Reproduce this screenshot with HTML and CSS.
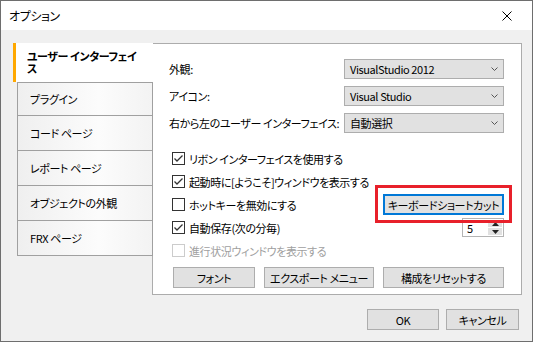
FILE: index.html
```html
<!DOCTYPE html>
<html>
<head>
    <title>オプション</title>
    <link rel="stylesheet" href="styles.css">
</head>
<body>

<div class="window">
    <div class="titlebar">
        <span class="title">オプション</span>
        <svg class="close" width="10" height="10" viewBox="0 0 10 10">
            <path d="M0.5 0.5 L9.5 9.5 M9.5 0.5 L0.5 9.5" stroke="#000" stroke-width="1" fill="none"/>
        </svg>
    </div>

    <div class="body">
        <div class="main">
            <div class="tabs">
                <div class="tab selected">ユーザー インターフェイ<br>ス</div>
                <div class="tab">プラグイン</div>
                <div class="tab">コード ページ</div>
                <div class="tab">レポート ページ</div>
                <div class="tab">オブジェクトの外観</div>
                <div class="tab">FRX ページ</div>
            </div>

            <div class="panel">
                <div class="fields">
                    <label>外観:</label>
                    <div class="combo">VisualStudio 2012 <svg width="7" height="4" viewBox="0 0 7 4"><path d="M0.5 0.5 L3.5 3.5 L6.5 0.5" stroke="#555" fill="none"/></svg></div>
                    <label>アイコン:</label>
                    <div class="combo">Visual Studio <svg width="7" height="4" viewBox="0 0 7 4"><path d="M0.5 0.5 L3.5 3.5 L6.5 0.5" stroke="#555" fill="none"/></svg></div>
                    <label>右から左のユーザー インターフェイス:</label>
                    <div class="combo">自動選択 <svg width="7" height="4" viewBox="0 0 7 4"><path d="M0.5 0.5 L3.5 3.5 L6.5 0.5" stroke="#555" fill="none"/></svg></div>
                </div>

                <div class="checks">
                    <div class="row">
                        <span class="check on"><svg width="11" height="11" viewBox="0 0 11 11"><path d="M1.5 5.5 L4 8 L9.5 2.5" stroke="#333" stroke-width="1.3" fill="none"/></svg></span>
                        <span>リボン インターフェイスを使用する</span>
                    </div>
                    <div class="row">
                        <span class="check on"><svg width="11" height="11" viewBox="0 0 11 11"><path d="M1.5 5.5 L4 8 L9.5 2.5" stroke="#333" stroke-width="1.3" fill="none"/></svg></span>
                        <span>起動時に[ようこそ]ウィンドウを表示する</span>
                    </div>
                    <div class="row">
                        <span class="check"></span>
                        <span>ホットキーを無効にする</span>
                        <div class="highlight">
                            <button class="btn focus">キーボードショートカット</button>
                        </div>
                    </div>
                    <div class="row">
                        <span class="check on"><svg width="11" height="11" viewBox="0 0 11 11"><path d="M1.5 5.5 L4 8 L9.5 2.5" stroke="#333" stroke-width="1.3" fill="none"/></svg></span>
                        <span>自動保存(次の分毎)</span>
                        <div class="spin">
                            <span>5</span>
                            <div class="spin-btns">
                                <div class="arrow"><svg width="7" height="4" viewBox="0 0 7 4"><path d="M0 4 L3.5 0 L7 4 Z" fill="#222"/></svg></div>
                                <div class="arrow"><svg width="7" height="4" viewBox="0 0 7 4"><path d="M0 0 L3.5 4 L7 0 Z" fill="#222"/></svg></div>
                            </div>
                        </div>
                    </div>
                    <div class="row disabled">
                        <span class="check"></span>
                        <span>進行状況ウィンドウを表示する</span>
                    </div>
                </div>

                <div class="panel-buttons">
                    <button class="btn w-font">フォント</button>
                    <button class="btn w-export">エクスポート メニュー</button>
                    <button class="btn w-reset">構成をリセットする</button>
                </div>
            </div>
        </div>

        <div class="footer">
            <button class="btn w-ok">OK</button>
            <button class="btn w-cancel">キャンセル</button>
        </div>
    </div>
</div>

</body>
</html>
```

FILE: styles.css
```css
/* options dialog */
* { box-sizing: border-box; }
body {
    margin: 0;
    font-family: "Noto Sans CJK JP", sans-serif;
    font-size: 11px;
    line-height: 14px;
    letter-spacing: -0.4px;
    font-feature-settings: "palt";
    color: #000;
}
.window {
    width: 533px; height: 342px;
    border: 1px solid #6e6e6e;
    background: #f0f0f0;
    display: flex; flex-direction: column;
}
.titlebar {
    height: 29px; background: #fff;
    display: flex; align-items: center; justify-content: space-between;
    padding: 0 20px 0 8px;
}
.title { font-size: 12px; }
.close { margin-top: 1px; }

.body { flex: 1; display: flex; flex-direction: column; }
.main { display: flex; margin: 13px 0 0 12px; }

.tabs { width: 140px; display: flex; flex-direction: column; margin-right: -1px; position: relative; z-index: 1; }
.tab {
    height: 36px; margin: -1px 0 0 4px;
    border: 1px solid #a0a0a0;
    background: linear-gradient(to right, #efefef, #fcfcfc 60%, #f3f3f3);
    display: flex; align-items: center;
    padding-left: 12px;
}
.tab.selected {
    height: 39px; margin: 0;
    border: none; border-left: 3px solid #ffa800;
    background: #fff;
    font-weight: bold; line-height: 12px;
    padding: 7px 0 0 11px; align-items: flex-start;
}
.tab:nth-child(2) { height: 34px; margin-top: 0; }

.panel {
    width: 370px; height: 252px;
    background: #fff; border: 1px solid #acacac;
    padding: 15px 17px 0 16px;
}
.fields {
    display: grid; grid-template-columns: 1fr 160px;
    grid-auto-rows: 20px; row-gap: 7px; align-items: center;
}
.combo {
    height: 20px; background: #e1e1e1; border: 1px solid #adadad;
    display: flex; align-items: center; justify-content: space-between;
    padding: 0 5px 0 5px;
}

.checks { margin-top: 14px; padding-left: 3px; }
.row { height: 23px; display: flex; align-items: center; gap: 4px; }
.check {
    width: 13px; height: 13px; border: 1px solid #333; background: #fff;
    display: flex; align-items: center; justify-content: center;
}
.disabled { color: #a0a0a0; }
.disabled .check { border-color: #cccccc; }

.btn {
    height: 21px; padding: 0;
    font: inherit; color: #000; letter-spacing: inherit;
    background: #e1e1e1; border: 1px solid #adadad;
}
.btn.focus { width: 121px; border: 2px solid #0078d7; }
.highlight {
    margin-left: auto; position: relative;
    display: flex;
}
.highlight::after {
    content: ""; position: absolute;
    left: -8px; right: -8px; top: -9px; bottom: -8px;
    border: 3px solid #e8202a;
}

.spin {
    margin-left: auto; width: 42px; height: 19px;
    border: 1px solid #b4b4b4; background: #fff;
    display: flex; justify-content: space-between; align-items: center;
    padding: 0 1px 0 4px;
}
.spin-btns { display: flex; flex-direction: column; gap: 1px; }
.arrow {
    width: 14px; height: 7px; background: #e1e1e1;
    display: flex; align-items: center; justify-content: center;
}

.panel-buttons { margin-top: 5px; padding-left: 4px; display: flex; gap: 9px; }
.w-font { width: 82px; }
.w-export { width: 110px; }
.w-reset { width: 121px; }

.footer { display: flex; justify-content: flex-end; gap: 7px; margin: 14px 13px 0 0; }
.w-ok { width: 72px; }
.w-cancel { width: 73px; }
```
